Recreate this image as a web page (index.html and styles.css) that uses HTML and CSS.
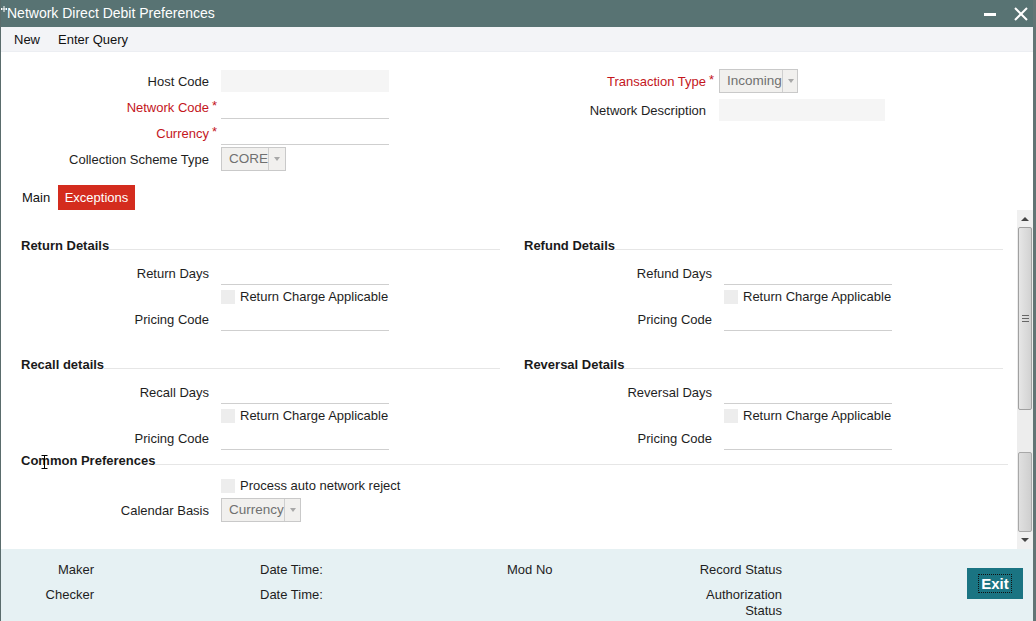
FILE: index.html
```html
<!DOCTYPE html>
<html>
<head>
<meta charset="utf-8">
<title>Network Direct Debit Preferences</title>
<link rel="stylesheet" href="styles.css">
</head>
<body>
<div class="window">
  <div class="titlebar">
    <svg class="move-cursor" width="8" height="10" viewBox="0 0 8 10"><path d="M1 5h6M4 2v6M2 4l-1 1 1 1M6 4l1 1-1 1" stroke="#fff" stroke-width="1" fill="none"/></svg>
    <span class="title">Network Direct Debit Preferences</span>
    <div class="win-ctrls">
      <span class="minimize"></span>
      <svg class="close" width="14" height="14" viewBox="0 0 14 14"><path d="M1 1L13 13M13 1L1 13" stroke="#fff" stroke-width="2"/></svg>
    </div>
  </div>
  <div class="menubar">
    <span class="menu-item">New</span>
    <span class="menu-item">Enter Query</span>
  </div>

  <div class="head-form">
    <div class="hf-left">
      <div class="hrow">
        <span class="lbl">Host Code</span><span class="star"></span>
        <span class="inp readonly"></span>
      </div>
      <div class="hrow">
        <span class="lbl req">Network Code</span><span class="star">*</span>
        <span class="inp line"></span>
      </div>
      <div class="hrow">
        <span class="lbl req">Currency</span><span class="star">*</span>
        <span class="inp line"></span>
      </div>
      <div class="hrow">
        <span class="lbl">Collection Scheme Type</span><span class="star"></span>
        <span class="sel sel-core"><span class="sel-val">CORE</span><span class="sel-arrow"></span></span>
      </div>
    </div>
    <div class="hf-right">
      <div class="hrow">
        <span class="lbl req">Transaction Type</span><span class="star">*</span>
        <span class="sel sel-inc"><span class="sel-val">Incoming</span><span class="sel-arrow"></span></span>
      </div>
      <div class="hrow hrow-desc">
        <span class="lbl">Network Description</span><span class="star"></span>
        <span class="inp readonly desc"></span>
      </div>
    </div>
  </div>

  <div class="tabs">
    <span class="tab">Main</span>
    <span class="tab active">Exceptions</span>
  </div>

  <div class="scroll-area">
    <div class="scroll-content">
      <div class="sec-grid">
        <div class="section">
          <div class="sec-head"><span>Return Details</span></div>
          <div class="frow"><span class="flbl">Return Days</span><span class="inp line"></span></div>
          <div class="crow"><span class="chk"></span><span>Return Charge Applicable</span></div>
          <div class="frow"><span class="flbl">Pricing Code</span><span class="inp line"></span></div>
        </div>
        <div class="section">
          <div class="sec-head"><span>Refund Details</span></div>
          <div class="frow"><span class="flbl">Refund Days</span><span class="inp line"></span></div>
          <div class="crow"><span class="chk"></span><span>Return Charge Applicable</span></div>
          <div class="frow"><span class="flbl">Pricing Code</span><span class="inp line"></span></div>
        </div>
        <div class="section">
          <div class="sec-head"><span>Recall details</span></div>
          <div class="frow"><span class="flbl">Recall Days</span><span class="inp line"></span></div>
          <div class="crow"><span class="chk"></span><span>Return Charge Applicable</span></div>
          <div class="frow"><span class="flbl">Pricing Code</span><span class="inp line"></span></div>
        </div>
        <div class="section">
          <div class="sec-head"><span>Reversal Details</span></div>
          <div class="frow"><span class="flbl">Reversal Days</span><span class="inp line"></span></div>
          <div class="crow"><span class="chk"></span><span>Return Charge Applicable</span></div>
          <div class="frow"><span class="flbl">Pricing Code</span><span class="inp line"></span></div>
        </div>
      </div>
      <div class="section common">
        <div class="sec-head"><span>Common Preferences</span>
          <svg class="ibeam" width="7" height="14" viewBox="0 0 7 14"><path d="M0.5 0.5h6M0.5 13.5h6M3.5 0.5v13" stroke="#000" stroke-width="1" fill="none"/></svg>
        </div>
        <div class="crow"><span class="chk"></span><span>Process auto network reject</span></div>
        <div class="frow srow"><span class="flbl">Calendar Basis</span>
          <span class="sel sel-cur"><span class="sel-val">Currency</span><span class="sel-arrow"></span></span>
        </div>
      </div>
    </div>
    <div class="scrollbar">
      <div class="sb-btn"><svg width="8" height="5" viewBox="0 0 8 5"><path d="M0 5L4 1L8 5Z" fill="#444"/></svg></div>
      <div class="sb-thumb"><span class="grip"></span></div>
      <div class="sb-track"></div>
      <div class="sb-thumb2"></div>
      <div class="sb-btn"><svg width="8" height="5" viewBox="0 0 8 5"><path d="M0 0L4 4L8 0Z" fill="#444"/></svg></div>
    </div>
  </div>

  <div class="footer">
    <div class="fcol f1"><span>Maker</span><span>Checker</span></div>
    <div class="fcol f2"><span>Date Time:</span><span>Date Time:</span></div>
    <div class="fcol f3"><span>Mod No</span></div>
    <div class="fcol f4"><span>Record Status</span><span>Authorization Status</span></div>
    <div class="exit-btn"><span class="focus">Exit</span></div>
  </div>
</div>
</body>
</html>
```
FILE: styles.css
```css
* { box-sizing: border-box; }
html, body { margin: 0; padding: 0; }
body {
  width: 1036px;
  height: 621px;
  overflow: hidden;
  font-family: "Liberation Sans", Arial, sans-serif;
  font-size: 13px;
  color: #1e1e1e;
  background: #fff;
}
.window {
  width: 1036px;
  height: 621px;
  display: flex;
  flex-direction: column;
  border-left: 1px solid #5a6c6c;
  border-right: 3px solid #627575;
  overflow: hidden;
  position: relative;
}
.titlebar {
  height: 27px;
  flex: none;
  background: #587373;
  color: #fff;
  display: flex;
  align-items: center;
  font-size: 14px;
  padding-left: 6px;
  position: relative;
}
.move-cursor { position: absolute; left: -1px; top: 4px; }
.title { padding-bottom: 1px; }
.win-ctrls {
  margin-left: auto;
  display: flex;
  align-items: center;
  gap: 18px;
  padding-right: 5px;
}
.minimize {
  width: 12px;
  height: 3px;
  background: #fff;
  margin-top: 1px;
}
.menubar {
  height: 25px;
  flex: none;
  background: #f3f4f7;
  border-bottom: 1px solid #eceef2;
  display: flex;
  align-items: center;
  padding-left: 13px;
  gap: 18px;
  color: #111;
}
.head-form {
  flex: none;
  height: 120px;
  padding-top: 16px;
  display: flex;
}
.hf-left, .hf-right { display: flex; flex-direction: column; }
.hrow {
  height: 26px;
  display: flex;
  align-items: center;
}
.hrow-desc { margin-top: 3px; }
.hf-left .lbl { width: 208px; }
.hf-right .lbl { width: 317px; }
.lbl { text-align: right; white-space: nowrap; }
.lbl.req { color: #c4161c; }
.star {
  color: #c4161c;
  width: 12px;
  padding-left: 3px;
  align-self: flex-start;
  padding-top: 4px;
}
.hf-right .star { width: 13px; }
.inp {
  display: block;
  width: 168px;
  height: 22px;
  flex: none;
}
.inp.readonly { background: #f5f5f5; }
.inp.desc { width: 166px; }
.inp.line { height: 23px; border-bottom: 1px solid #cfcfcf; }
.sel {
  display: flex;
  height: 24px;
  border: 1px solid #c9c9c9;
  background: #f1f0ee;
  color: #707070;
  flex: none;
}
.sel-val { padding-left: 7px; line-height: 22px; flex: 1; font-size: 13.5px; }
.sel-arrow {
  width: 17px;
  border-left: 1px solid #cfcfcf;
  position: relative;
}
.sel-arrow::after {
  content: "";
  position: absolute;
  left: 5px;
  top: 9px;
  border-left: 3.5px solid transparent;
  border-right: 3.5px solid transparent;
  border-top: 4px solid #a8a8a8;
}
.sel-core { width: 65px; }
.sel-inc { width: 79px; }
.sel-cur { width: 80px; }
.tabs {
  flex: none;
  height: 25px;
  margin-top: 13px;
  display: flex;
  padding-left: 13px;
}
.tab {
  line-height: 25px;
  padding: 0 8px;
  color: #111;
}
.tab.active {
  background: #d42c1e;
  color: #fff;
  padding: 0 6.5px;
}
.scroll-area {
  flex: none;
  height: 339px;
  display: flex;
}
.scroll-content {
  flex: 1;
  padding: 28px 9px 0 19px;
}
.sec-grid {
  display: grid;
  grid-template-columns: 480px 480px;
  column-gap: 23px;
  row-gap: 26px;
}
.sec-head {
  display: flex;
  align-items: flex-end;
  font-weight: bold;
  line-height: 15px;
  height: 15px;
  margin-bottom: 9px;
  padding-left: 1px;
  color: #1a1a1a;
  position: relative;
}
.sec-head::after {
  content: "";
  flex: 1;
  height: 1px;
  background: #e6e6e6;
  margin-bottom: 3px;
}
.frow {
  height: 23px;
  display: flex;
  align-items: center;
}
.flbl { width: 189px; text-align: right; margin-right: 12px; }
.crow {
  height: 23px;
  display: flex;
  align-items: center;
  padding-left: 201px;
  gap: 5px;
}
.chk {
  width: 14px;
  height: 14px;
  background: #ededed;
  flex: none;
}
.common { margin-top: 3px; }
.common .sec-head { margin-bottom: 6px; }
.srow { height: 24px; margin-top: 1px; }
.ibeam { position: absolute; left: 21px; top: 2px; }
.scrollbar {
  width: 16px;
  flex: none;
  display: flex;
  flex-direction: column;
  background: #ececec;
}
.sb-btn {
  height: 17px;
  display: flex;
  align-items: center;
  justify-content: center;
  background: #f0f0f0;
}
.sb-thumb {
  height: 183px;
  margin: 0 1px;
  border: 1px solid #a0a0a0;
  border-radius: 2px;
  background: linear-gradient(to right, #e6e6e6, #d2d2d2);
  display: flex;
  align-items: center;
  justify-content: center;
}
.grip {
  width: 7px;
  height: 7px;
  border-top: 1px solid #666;
  border-bottom: 1px solid #666;
  position: relative;
}
.grip::after {
  content: "";
  position: absolute;
  left: 0; right: 0; top: 2px;
  height: 1px;
  background: #666;
}
.sb-track { height: 42px; background: #ededed; }
.sb-thumb2 {
  height: 80px;
  margin: 0 1px;
  border: 1px solid #a8a8a8;
  border-radius: 2px;
  background: linear-gradient(to right, #e0e0e0, #cfcfcf);
}
.footer {
  flex: 1;
  background: #e6f1f3;
  display: flex;
  padding-top: 13px;
  color: #1e1e1e;
}
.fcol {
  display: flex;
  flex-direction: column;
  gap: 9px;
  line-height: 16px;
}
.f1 { width: 93px; text-align: right; }
.f2 { margin-left: 166px; width: 247px; }
.f3 { width: 185px; }
.f4 { width: 90px; text-align: right; }
.exit-btn {
  margin-left: 185px;
  margin-top: 6px;
  width: 56px;
  height: 31px;
  background: #1a7482;
  color: #fff;
  font-weight: bold;
  font-size: 15px;
  display: flex;
  align-items: center;
  justify-content: center;
}
.focus {
  outline: 1px dotted #111;
  padding: 0 2px;
  line-height: 17px;
}
```
